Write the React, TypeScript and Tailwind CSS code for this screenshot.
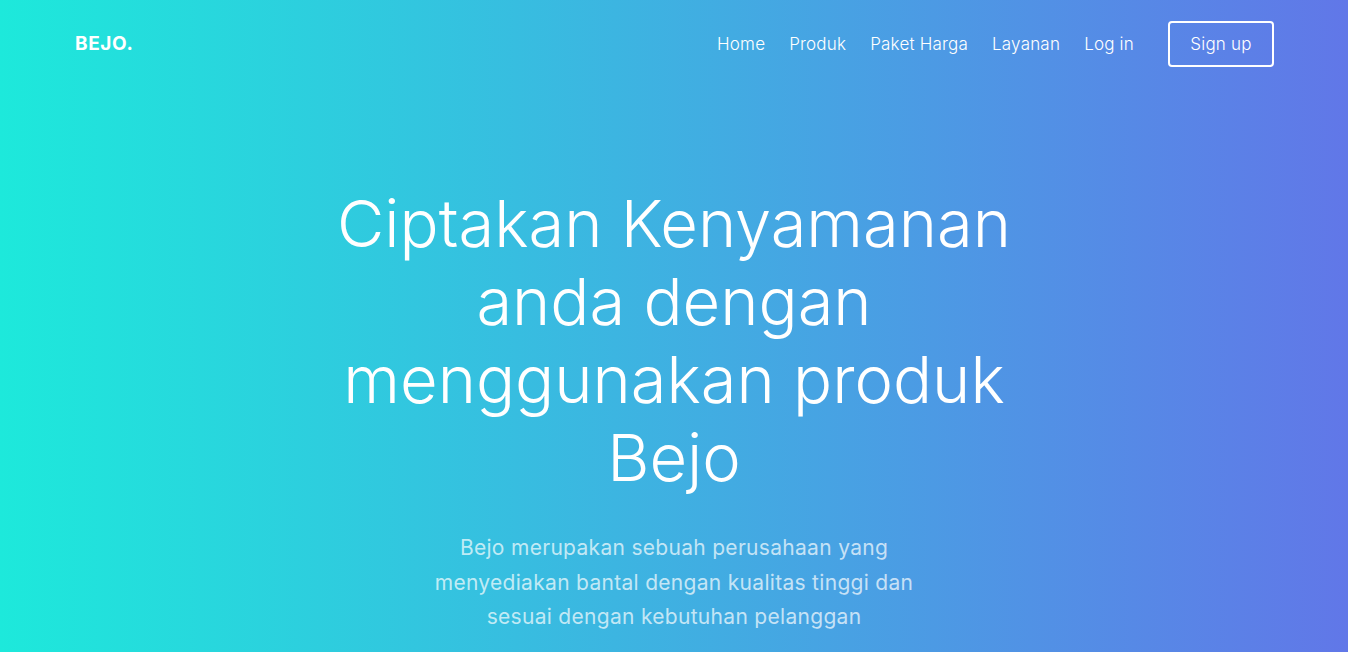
const links = ['Home', 'Produk', 'Paket Harga', 'Layanan', 'Log in'];

const App = () => {
  return (
    <div
      className="min-h-[652px] w-full bg-[linear-gradient(to_right,#1de9db,#6177e8)] text-white overflow-hidden"
      style={{ fontFamily: 'Inter, "Noto Sans", sans-serif' }}
    >
      <header className="flex items-center justify-between pl-[75px] pr-[74px] pt-[21px]">
        <div className="text-[19px] font-bold tracking-[0.6px] pt-[1px]">BEJO.</div>
        <nav className="flex items-center">
          <ul className="flex items-center gap-[24px] text-[17px] font-light tracking-[0.2px] pt-[2px]">
            {links.map((l) => (
              <li key={l}>
                <a href="#" className="hover:opacity-80">{l}</a>
              </li>
            ))}
          </ul>
          <a
            href="#"
            className="ml-[34px] flex h-[46px] w-[106px] items-center justify-center rounded-[4px] border-2 border-white text-[17px] font-light tracking-[0.2px] pt-[2px]"
          >
            Sign up
          </a>
        </nav>
      </header>

      <section className="flex flex-col items-center text-center pt-[118px]">
        <h1 className="max-w-[700px] text-[65px] font-light leading-[78px]">
          Ciptakan Kenyamanan anda dengan menggunakan produk Bejo
        </h1>
        <p className="mt-[34px] max-w-[500px] text-[21px] leading-[34.5px] tracking-[0.3px] text-white/70">
          Bejo merupakan sebuah perusahaan yang menyediakan bantal dengan kualitas tinggi dan sesuai dengan kebutuhan pelanggan
        </p>
      </section>
    </div>
  );
};

export default App;
